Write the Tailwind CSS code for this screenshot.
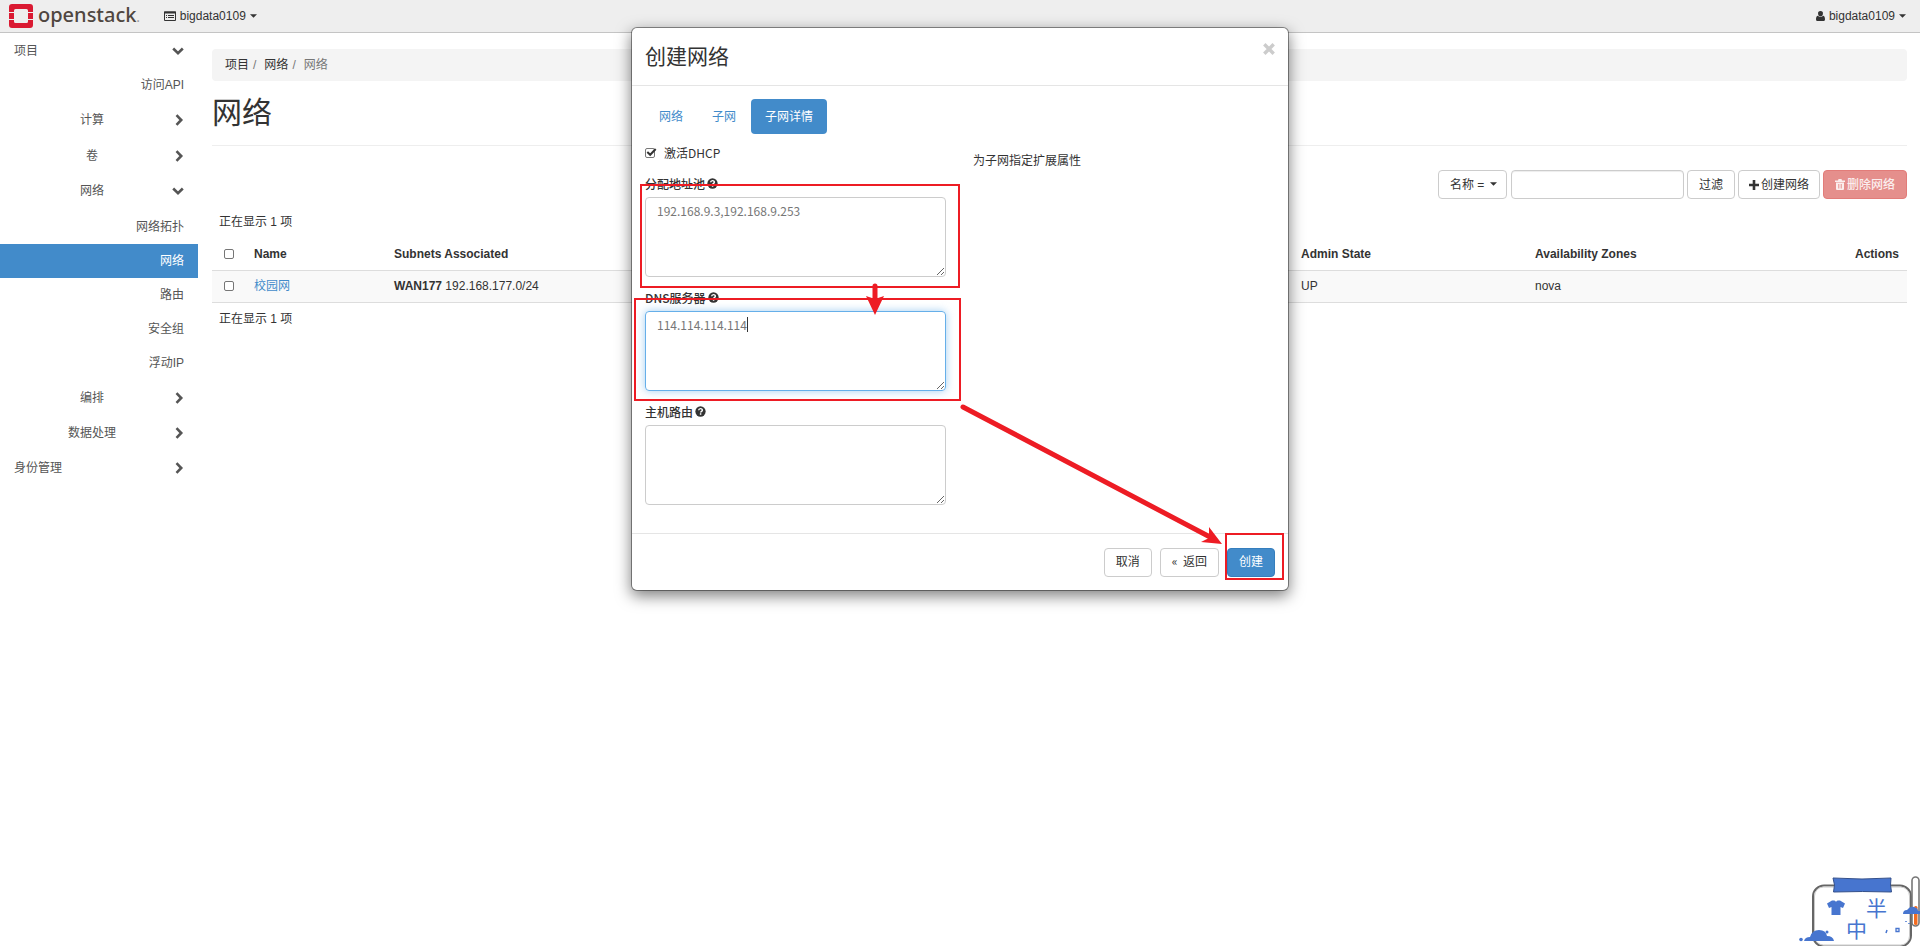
<!DOCTYPE html>
<html lang="zh-CN">
<head>
<meta charset="utf-8">
<title>网络 - OpenStack Dashboard</title>
<script src="https://cdn.jsdelivr.net/npm/@tailwindcss/browser@4"></script>
</head>
<body class="min-h-screen overflow-hidden bg-white font-['Liberation_Sans','Noto_Sans_CJK_SC',sans-serif] text-xs leading-4 text-[#333]">

<svg class="hidden" aria-hidden="true">
  <symbol id="right" viewBox="0 0 10 12"><path d="M2.5 1.2 7.2 6 2.5 10.8" fill="none" stroke="currentColor" stroke-width="2.6"/></symbol>
  <symbol id="down" viewBox="0 0 12 10"><path d="M1.2 2.5 6 7.2 10.8 2.5" fill="none" stroke="currentColor" stroke-width="2.6"/></symbol>
  <symbol id="caret" viewBox="0 0 8 4"><path d="M0 0h8L4 4z" fill="currentColor"/></symbol>
  <symbol id="help" viewBox="0 0 12 12"><circle cx="6" cy="6" r="5.6" fill="currentColor"/><path d="M4 4.7C4.1 2.3 8 2.3 8 4.5 8 5.8 6.1 5.8 6.1 7.2M6.1 8v1.6" fill="none" stroke="#fff" stroke-width="1.6"/></symbol>
</svg>

<header class="flex h-[33px] items-center justify-between border-b border-[#c4c4c4] bg-[#eee] pr-3.5 pl-[9px]">
  <div class="flex items-center">
    <a href="#" class="flex items-center gap-[5px] text-[#4f4640]" aria-label="openstack">
      <svg class="h-6 w-6" viewBox="0 0 24 24">
        <path fill="#da1a32" d="M3 0h18a3 3 0 0 1 3 3v5h-5V6.500a1.500 1.500 0 0 0-1.500-1.500h-11A1.500 1.500 0 0 0 5 6.500V8H0V3a3 3 0 0 1 3-3zM0 9h5v6H0zM19 9h5v6h-5zM0 16h5v1.500A1.500 1.500 0 0 0 6.500 19h11a1.500 1.500 0 0 0 1.500-1.500V16h5v5a3 3 0 0 1-3 3H3a3 3 0 0 1-3-3z"/>
      </svg>
      <span class="pb-0.5 font-['Noto_Sans',sans-serif] text-[20px] leading-6 font-medium">openstack<span class="text-xs text-[#999]">.</span></span>
    </a>
    <button class="ml-6 flex items-center gap-1 text-[#333]">
      <svg class="h-[10px] w-3" viewBox="0 0 12 10"><path d="M.5 1h11v8.500H.5z" fill="none" stroke="currentColor"/><path d="M0 .5h12v2H0zM2 4h1v1H2zM4 4h6v1H4zM2 6h1v1H2zM4 6h6v1H4z" fill="currentColor"/></svg>
      <span>bigdata0109</span>
      <svg class="h-1 w-[7px]"><use href="#caret"/></svg>
    </button>
  </div>
  <button class="flex items-center gap-1 text-[#333]">
    <svg class="h-[10px] w-[9px]" viewBox="0 0 10 11"><path fill="currentColor" d="M5 0a2.700 2.700 0 0 1 2.700 3C7.700 4.700 6.600 6 5 6S2.300 4.700 2.300 3A2.700 2.700 0 0 1 5 0zM2.200 5.200C3.700 7 6.300 7 7.800 5.200 9.300 5.400 10 7 10 9c0 1.300-.6 2-1.500 2h-7C.6 11 0 10.300 0 9c0-2 .7-3.600 2.200-3.800z"/></svg>
    <span>bigdata0109</span>
    <svg class="h-1 w-[7px]"><use href="#caret"/></svg>
  </button>
</header>

<div class="flex">
  <nav class="w-[198px] shrink-0 text-[#555]">
    <a href="#" class="flex h-[35px] items-center justify-between pr-3.5 pl-3.5"><span>项目</span><svg class="h-[10px] w-3"><use href="#down"/></svg></a>
    <a href="#" class="flex h-[34px] items-center justify-end pr-3.5">访问API</a>
    <a href="#" class="grid h-9 grid-cols-[14px_1fr_14px] items-center pr-3.5"><span class="col-start-2 text-center">计算</span><svg class="h-3 w-[10px] justify-self-end"><use href="#right"/></svg></a>
    <a href="#" class="grid h-[35px] grid-cols-[14px_1fr_14px] items-center pr-3.5"><span class="col-start-2 text-center">卷</span><svg class="h-3 w-[10px] justify-self-end"><use href="#right"/></svg></a>
    <a href="#" class="grid h-9 grid-cols-[14px_1fr_14px] items-center pr-3.5"><span class="col-start-2 text-center">网络</span><svg class="h-[10px] w-3 justify-self-end"><use href="#down"/></svg></a>
    <a href="#" class="flex h-[35px] items-center justify-end pr-3.5">网络拓扑</a>
    <a href="#" class="flex h-[34px] items-center justify-end bg-[#428bca] pr-3.5 text-white">网络</a>
    <a href="#" class="flex h-[34px] items-center justify-end pr-3.5">路由</a>
    <a href="#" class="flex h-[34px] items-center justify-end pr-3.5">安全组</a>
    <a href="#" class="flex h-[34px] items-center justify-end pr-3.5">浮动IP</a>
    <a href="#" class="grid h-[35px] grid-cols-[14px_1fr_14px] items-center pr-3.5"><span class="col-start-2 text-center">编排</span><svg class="h-3 w-[10px] justify-self-end"><use href="#right"/></svg></a>
    <a href="#" class="grid h-[35px] grid-cols-[14px_1fr_14px] items-center pr-3.5"><span class="col-start-2 text-center">数据处理</span><svg class="h-3 w-[10px] justify-self-end"><use href="#right"/></svg></a>
    <a href="#" class="flex h-[35px] items-center justify-between pr-3.5 pl-3.5"><span>身份管理</span><svg class="h-3 w-[10px]"><use href="#right"/></svg></a>
  </nav>

  <main class="min-w-0 flex-1 pt-4 pr-[13px] pl-3.5">
    <ol class="flex h-8 items-center rounded bg-[#f4f4f4] px-[13px]">
      <li><a href="#">项目</a><span class="px-1 text-[#777]">/</span></li>
      <li class="pl-1"><a href="#">网络</a><span class="px-1 text-[#777]">/</span></li>
      <li class="pl-1 text-[#777]">网络</li>
    </ol>
    <h1 class="mt-3.5 border-b border-[#eee] pb-3.5 text-[30px] leading-9">网络</h1>

    <div class="mt-6 flex justify-end gap-[3px]">
      <label class="relative mr-px">
        <select aria-label="过滤条件" class="h-[29px] w-[69px] appearance-none rounded border border-[#ccc] bg-white pl-[11px] text-xs"><option>名称 =</option></select>
        <svg class="pointer-events-none absolute top-3 right-2.5 h-1 w-[7px]"><use href="#caret"/></svg>
      </label>
      <input type="text" aria-label="过滤" class="h-[29px] w-[173px] rounded border border-[#ccc] px-3 shadow-[inset_0_1px_1px_rgba(0,0,0,0.075)]">
      <button class="h-[29px] rounded border border-[#ccc] px-[11px]">过滤</button>
      <button class="flex h-[29px] items-center gap-0.5 rounded border border-[#ccc] px-[10px]"><svg class="h-[10px] w-[10px]" viewBox="0 0 10 10"><path d="M5 0v10M0 5h10" stroke="currentColor" stroke-width="2.600"/></svg>创建网络</button>
      <button class="flex h-[29px] items-center gap-0.5 rounded border border-[#e27c79] bg-[#e58f8c] px-[11px] font-medium text-[#fbeeee]"><svg class="h-[11px] w-[10px]" viewBox="0 0 10 11"><path fill="currentColor" fill-rule="evenodd" d="M0 1.500h3L3.500 0h3L7 1.500h3V3H0zM1 3.500h8V10a1 1 0 0 1-1 1H2a1 1 0 0 1-1-1zM3 5v4.500h.7V5zM4.700 5v4.500h.6V5zM6.300 5v4.500H7V5z"/></svg>删除网络</button>
    </div>

    <table class="mt-[15px] w-full table-fixed text-left">
      <caption class="px-[7px] pb-2 text-left leading-4">正在显示 1 项</caption>
      <colgroup><col class="w-[34px]"><col class="w-[140px]"><col><col class="w-[234px]"><col class="w-[220px]"><col class="w-[160px]"></colgroup>
      <thead>
        <tr class="h-8 border-b border-[#ddd]">
          <th class="pl-3"><input type="checkbox" aria-label="全选" class="block h-[10px] w-[10px] appearance-none rounded-xs border border-[#767676] bg-white"></th>
          <th class="px-2">Name</th><th class="px-2">Subnets Associated</th><th class="px-2">Admin State</th><th class="px-2">Availability Zones</th><th class="px-2 text-right">Actions</th>
        </tr>
      </thead>
      <tbody>
        <tr class="h-8 border-b border-[#ddd] bg-[#f9f9f9]">
          <td class="pl-3"><input type="checkbox" aria-label="选择校园网" class="block h-[10px] w-[10px] appearance-none rounded-xs border border-[#767676] bg-white"></td>
          <td class="px-2"><a href="#" class="text-[#428bca]">校园网</a></td><td class="px-2"><b>WAN177</b> 192.168.177.0/24</td><td class="px-2">UP</td><td class="px-2">nova</td><td></td>
        </tr>
      </tbody>
    </table>
    <p class="mt-2 px-[7px]">正在显示 1 项</p>
  </main>
</div>

<div class="absolute inset-x-0 top-[27px] flex justify-center">
  <section role="dialog" aria-labelledby="dlg" class="relative w-[658px] rounded-md border border-black/40 bg-white bg-clip-padding font-['Noto_Sans_CJK_SC',sans-serif] shadow-[0_5px_15px_rgba(0,0,0,0.5)]">
    <div class="flex h-[58px] items-center justify-between border-b border-[#e5e5e5] px-[13px]">
      <h2 id="dlg" class="pb-1 text-[21px] leading-7">创建网络</h2>
      <button aria-label="关闭" class="mb-4 text-[#ccc]"><svg class="h-3 w-3" viewBox="0 0 12 12"><path d="m1.300 1.300 9.400 9.400M10.700 1.300 1.300 10.700" stroke="currentColor" stroke-width="3.400"/></svg></button>
    </div>
    <form class="px-[13px] pt-[13px]" onsubmit="return false">
      <div class="flex gap-px">
        <a href="#" class="rounded px-3.5 pt-2 pb-[10px] leading-[17px] text-[#428bca]">网络</a>
        <a href="#" class="rounded px-3.5 pt-2 pb-[10px] leading-[17px] text-[#428bca]">子网</a>
        <a href="#" class="rounded bg-[#428bca] px-3.5 pt-2 pb-[10px] leading-[17px] text-white">子网详情</a>
      </div>
      <div class="flex gap-[27px] pt-[9px] pb-7">
        <div class="w-[301px]">
          <label class="flex h-5 items-center gap-[9px]">
            <span class="relative h-[10px] w-[10px]">
              <input type="checkbox" checked class="block h-[10px] w-[10px] appearance-none rounded-xs border border-[#777]">
              <svg class="pointer-events-none absolute top-0 left-0 h-[10px] w-3" viewBox="0 0 12 10"><path d="m2.300 4 2.900 2.800L10.700 1" fill="none" stroke="#333" stroke-width="2"/></svg>
            </span>
            激活DHCP
          </label>
          <div class="mt-[11px]">
            <label for="pool" class="flex h-[19px] items-center gap-0.5 font-medium">分配地址池<svg class="h-[11px] w-[11px]"><use href="#help"/></svg></label>
            <textarea id="pool" class="mt-1 block h-20 w-full rounded border border-[#ccc] px-[11px] py-1 leading-[17px] text-[#777]">192.168.9.3,192.168.9.253</textarea>
          </div>
          <div class="mt-[11px]">
            <label for="dns" class="flex h-[19px] items-center gap-0.5 font-medium">DNS服务器<svg class="h-[11px] w-[11px]"><use href="#help"/></svg></label>
            <div class="relative mt-1">
              <textarea id="dns" class="block h-20 w-full rounded border border-[#66afe9] px-[11px] py-1 leading-[17px] text-[#777] shadow-[0_0_8px_rgba(102,175,233,0.6)]">114.114.114.114</textarea>
              <span class="absolute top-1.5 left-[102px] h-[15px] w-px bg-[#333]"></span>
            </div>
          </div>
          <div class="mt-[11px]">
            <label for="route" class="flex h-[19px] items-center gap-0.5 font-medium">主机路由<svg class="h-[11px] w-[11px]"><use href="#help"/></svg></label>
            <textarea id="route" class="mt-1 block h-20 w-full rounded border border-[#ccc] px-[11px] py-1 leading-[17px] text-[#777]"></textarea>
          </div>
        </div>
        <p class="pt-[9px]">为子网指定扩展属性</p>
      </div>
    </form>
    <div class="flex h-[57px] items-center justify-end gap-2 border-t border-[#e5e5e5] px-[13px]">
      <button class="h-[29px] rounded border border-[#ccc] px-[11px] pb-0.5">取消</button>
      <button class="h-[29px] rounded border border-[#ccc] px-[11px] pb-0.5 whitespace-pre">«  返回</button>
      <button class="h-[29px] rounded border border-[#357ebd] bg-[#428bca] px-[11px] pb-0.5 text-white">创建</button>
    </div>

    <svg class="pointer-events-none absolute top-0 left-0 h-[562px] w-[656px] overflow-visible" viewBox="632 28 656 562" aria-hidden="true">
      <g fill="none" stroke="#ed1c24" stroke-width="2">
        <path d="M641 185h318v102H641zM635 299h325v101H635zM1226 534h57v45h-57z"/>
        <path d="M875 286v16M963 407l247 130" stroke-width="5" stroke-linecap="round"/>
      </g>
      <path fill="#ed1c24" d="m875 315-9-19 9 3 9-3zM1222 544l-21-2 8-4 0-11z"/>
    </svg>
  </section>
</div>

<svg class="absolute right-0 bottom-0 h-[72px] w-[122px]" viewBox="1798 874 122 72" aria-hidden="true">
  <rect x="1813" y="885.500" width="98" height="61" rx="11" fill="#fff" stroke="#666" stroke-width="2"/>
  <rect x="1814.500" y="887" width="95" height="58" rx="9" fill="none" stroke="#c9c9c9"/>
  <path d="M1833 878q29 2 58 0l-.5 7 1 7q-29-1-58 0l1-7z" fill="#4775cf" stroke="#34508b"/>
  <path d="M1827 903.500l5-3h2.500q1.500 2 3 0h2.500l5 3-2 4.500-2.500-1v8h-9v-8l-2.500 1z" fill="#4775cf"/>
  <g fill="#4775cf" font-family="'Noto Sans CJK SC',sans-serif" font-size="21"><text x="1866" y="916">半</text><text x="1846" y="937">中</text></g>
  <path d="M1804 941q1-4 6-4 2-7 9-7 7 0 8 6 6 0 7 5z" fill="#4775cf"/>
  <circle cx="1801" cy="939.500" r="1.800" fill="#4775cf"/><circle cx="1827" cy="932" r="1.500" fill="#4775cf"/>
  <rect x="1912" y="877" width="7" height="49" rx="3.500" fill="#fff" stroke="#777" stroke-width="1.600"/>
  <rect x="1914" y="906" width="3.500" height="19" rx="1.500" fill="#f36c21"/>
  <path d="M1903 914q0-4 4-4 3-4 7-3 4 1 4 4h2v3z" fill="#4775cf"/>
  <path d="M1896 928.500h3v3h-3z" fill="none" stroke="#4775cf" stroke-width="1.300"/>
  <path d="m1887 930-1 3M1906 921v1M1909 923v1" stroke="#4775cf" stroke-width="1.500"/>
</svg>
</body>
</html>
